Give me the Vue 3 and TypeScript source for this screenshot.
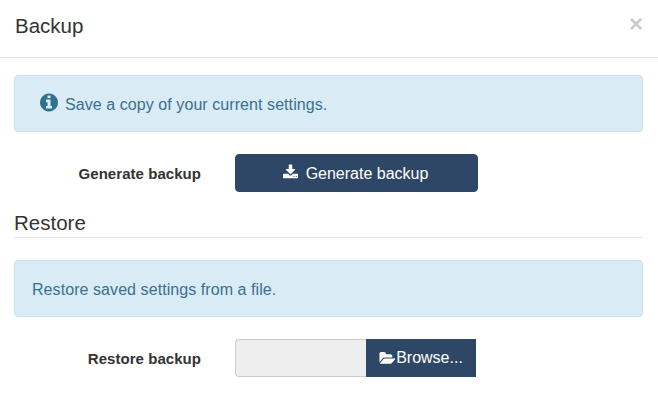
<script setup lang="ts">
const iconInfo = "M1024 1376v-160q0-14-9-23t-23-9h-96v-512q0-14-9-23t-23-9h-320q-14 0-23 9t-9 23v160q0 14 9 23t23 9h96v320h-96q-14 0-23 9t-9 23v160q0 14 9 23t23 9h448q14 0 23-9t9-23zm-128-896v-160q0-14-9-23t-23-9h-192q-14 0-23 9t-9 23v160q0 14 9 23t23 9h192q14 0 23-9t9-23zm640 416q0 209-103 385.5t-279.5 279.5-385.5 103-385.5-103-279.5-279.5-103-385.5 103-385.5 279.5-279.5 385.5-103 385.5 103 279.5 279.5 103 385.5z";
const iconDownload = "M1280 1344q0-26-19-45t-45-19-45 19-19 45 19 45 45 19 45-19 19-45zm256 0q0-26-19-45t-45-19-45 19-19 45 19 45 45 19 45-19 19-45zm128-224v320q0 40-28 68t-68 28h-1472q-40 0-68-28t-28-68v-320q0-40 28-68t68-28h465l135 136q58 56 136 56t136-56l136-136h464q40 0 68 28t28 68zm-325-569q17 41-14 70l-448 448q-18 19-45 19t-45-19l-448-448q-31-29-14-70 17-39 59-39h256v-448q0-26 19-45t45-19h256q26 0 45 19t19 45v448h256q42 0 59 39z";
const iconFolder = "M1879 952q0 31-31 66l-336 396q-43 51-120.5 86.5t-143.5 35.5h-1088q-34 0-60.5-13t-26.5-43q0-31 31-66l336-396q43-51 120.5-86.5t143.5-35.5h1088q34 0 60.5 13t26.5 43zm-343-344v160h-832q-94 0-197 47.5t-164 119.5l-337 396-5 6q0-4-.5-12.5t-.5-12.5v-960q0-92 66-158t158-66h320q92 0 158 66t66 158v32h544q92 0 158 66t66 158z";
</script>

<template>
  <div class="modal">
    <header class="modal-header">
      <h4 class="title">Backup</h4>
      <button class="close" type="button">×</button>
    </header>
    <main class="modal-body">
      <div class="alert first">
        <svg class="info" viewBox="0 0 1536 1792" aria-hidden="true"><path :d="iconInfo" /></svg>
        <span>Save a copy of your current settings.</span>
      </div>
      <div class="row">
        <label class="label">Generate backup</label>
        <div class="control">
          <button class="btn" type="button">
            <svg class="dl" viewBox="0 0 1664 1792" aria-hidden="true"><path :d="iconDownload" /></svg>
            <span>Generate backup</span>
          </button>
        </div>
      </div>
      <h5 class="legend">Restore</h5>
      <div class="alert second">Restore saved settings from a file.</div>
      <div class="row">
        <label class="label">Restore backup</label>
        <div class="control group">
          <div class="file-input"></div>
          <span class="browse">
            <svg class="folder" viewBox="0 0 1920 1792" aria-hidden="true"><path :d="iconFolder" /></svg>
            <span>Browse...</span>
          </span>
        </div>
      </div>
    </main>
  </div>
</template>

<style>
html, body { background: #fff; }
</style>

<style scoped>
.modal {
  width: 658px;
  height: 408px;
  overflow: hidden;
  background: #fff;
  color: #333;
  font-family: "Liberation Sans", Arial, sans-serif;
  font-size: 16px;
  line-height: 1.42857;
  box-sizing: border-box;
}
.modal-header {
  display: flex;
  justify-content: space-between;
  align-items: flex-start;
  height: 58px;
  box-sizing: border-box;
  padding: 14px 15px 15px;
  border-bottom: 1px solid #e5e5e5;
}
.title {
  margin: 0;
  font-size: 20.5px;
  font-weight: 400;
  line-height: 23px;
}
.close {
  padding: 0;
  border: 0;
  background: none;
  font-family: inherit;
  font-size: 24px;
  font-weight: 700;
  line-height: 18px;
  color: #000;
  opacity: 0.2;
  margin-top: 1px;
}
.modal-body {
  padding: 17px 15px 0 14px;
}
.alert {
  height: 57px;
  box-sizing: border-box;
  border: 1px solid #c5e5ef;
  border-radius: 4px;
  background: #d9ebf5;
  color: #3a7090;
  display: flex;
  align-items: center;
  padding: 3px 17px 0;
  letter-spacing: 0.07px;
}
.alert.first {
  padding-left: 25px;
  gap: 7px;
  margin-bottom: 22px;
}
.alert.second {
  margin-bottom: 22px;
}
.info {
  width: 18px;
  height: 21px;
  fill: #31708f;
  margin-top: -6px;
}
.row {
  display: flex;
  align-items: center;
  height: 38px;
}
.label {
  width: 187px;
  text-align: right;
  font-weight: 700;
  font-size: 15px;
  letter-spacing: 0.05px;
  color: #333;
  flex: none;
  padding-top: 2px;
}
.control {
  margin-left: 34px;
  flex: none;
}
.btn {
  width: 243px;
  height: 38px;
  border: 1px solid #2e4766;
  border-radius: 4px;
  background: #2e4766;
  color: #fff;
  font-family: inherit;
  font-size: 16px;
  display: flex;
  align-items: center;
  justify-content: center;
  gap: 8px;
  padding: 1px 2px 0 0;
}
.dl {
  width: 15px;
  height: 17px;
  fill: #fff;
  margin-top: -3px;
}
.legend {
  margin: 17px 0 22px;
  height: 28px;
  border-bottom: 1px solid #e5e5e5;
  font-size: 20.5px;
  font-weight: 400;
  line-height: 27px;
  color: #333;
}
.group {
  display: flex;
}
.file-input {
  width: 131px;
  height: 38px;
  box-sizing: border-box;
  background: #eee;
  border: 1px solid #ccc;
  border-right: 0;
  border-radius: 4px 0 0 4px;
}
.browse {
  width: 110px;
  height: 38px;
  background: #2e4766;
  color: #fff;
  display: flex;
  align-items: center;
  justify-content: center;
}
.folder {
  width: 17px;
  height: 15px;
  fill: #fff;
}
</style>
